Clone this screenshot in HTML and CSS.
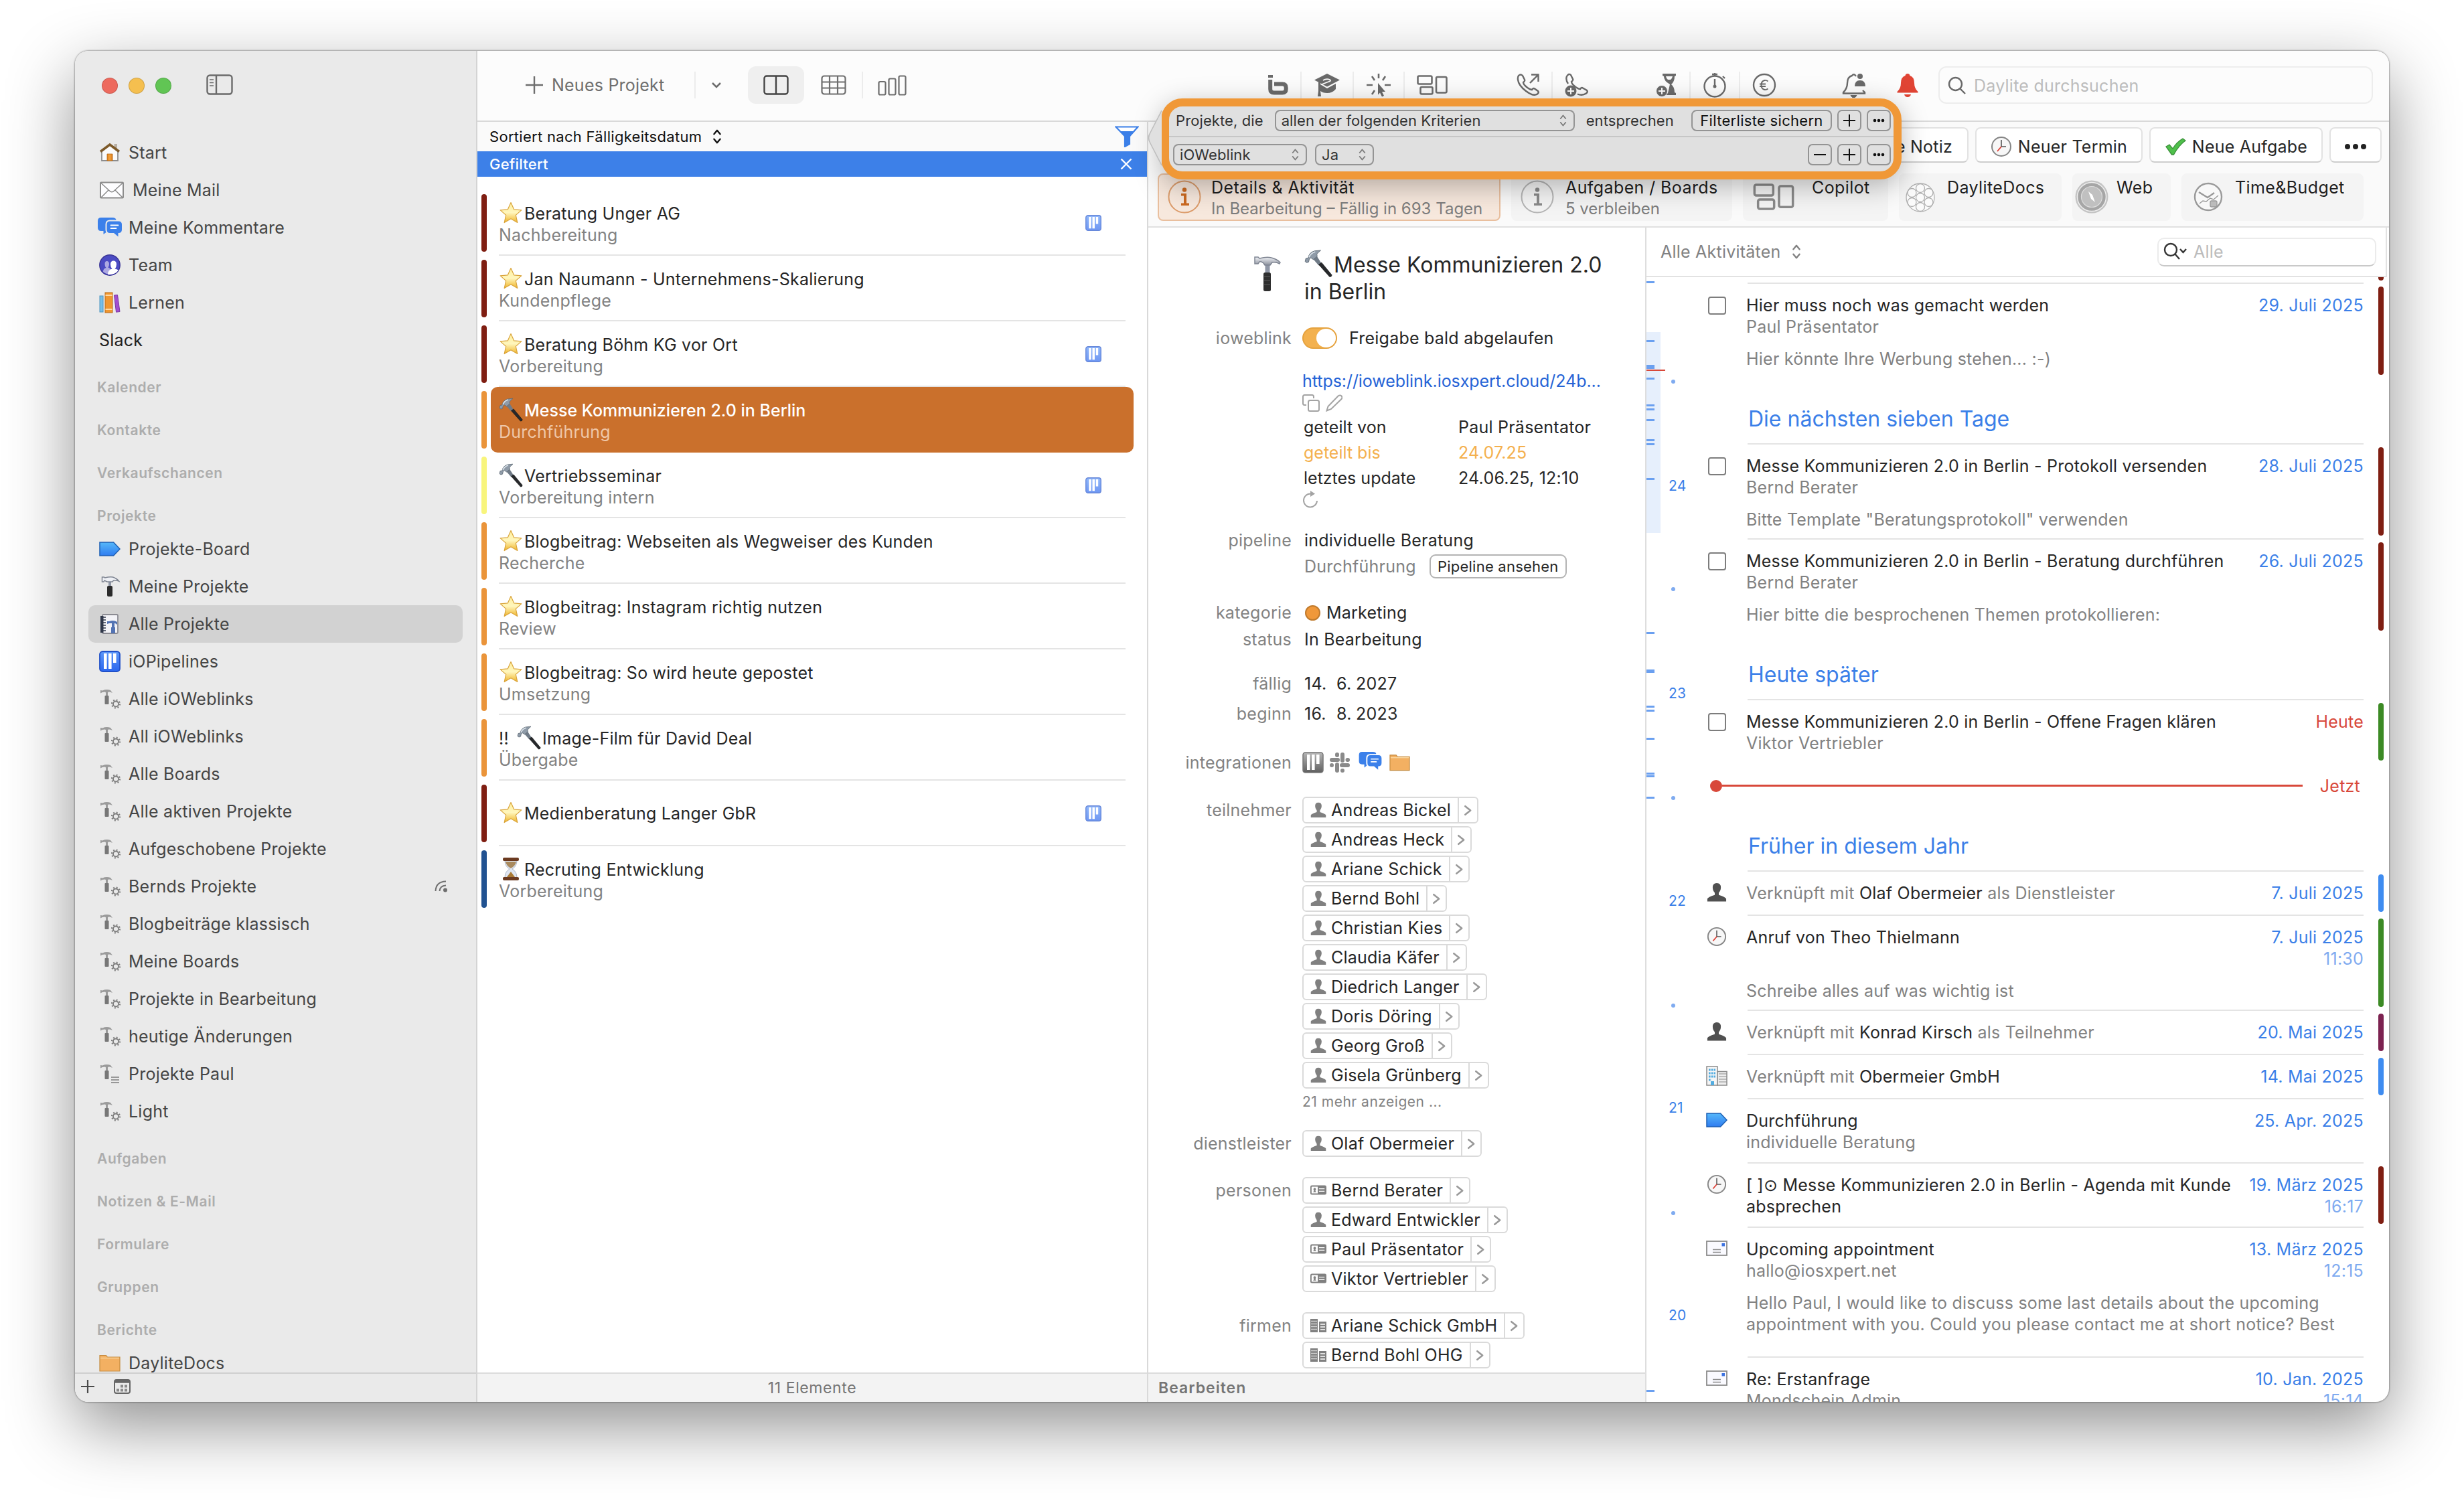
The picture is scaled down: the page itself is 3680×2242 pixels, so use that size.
FILE: index.html
```html
<!DOCTYPE html>
<html lang="de">

<head>
  <meta charset="UTF-8" />
  <meta name="viewport" content="width=device-width, initial-scale=1.0" />
  <title>Daylite – Alle Projekte</title>
  <link rel="stylesheet" href="styles.css">
</head>

<body>
  <!-- icon sprite -->
  <svg class="sprite" width="0" height="0">
    <defs>
      <linearGradient id="gStar" x1="0" y1="0" x2="0" y2="1"><stop offset="0" stop-color="#fff0a0" /><stop offset=".5" stop-color="#fff6bc" /><stop offset="1" stop-color="#f0b429" /></linearGradient>
      <linearGradient id="gTag" x1="0" y1="0" x2="0" y2="1"><stop offset="0" stop-color="#55b8fa" /><stop offset="1" stop-color="#2f7cf0" /></linearGradient>
      <linearGradient id="gPipe" x1="0" y1="0" x2="0" y2="1"><stop offset="0" stop-color="#5d97f8" /><stop offset="1" stop-color="#2a66ee" /></linearGradient>
      <linearGradient id="gPipeGray" x1="0" y1="0" x2="0" y2="1"><stop offset="0" stop-color="#b4b4b4" /><stop offset="1" stop-color="#606060" /></linearGradient>
      <linearGradient id="gMetal" x1="0" y1="0" x2="0" y2="1"><stop offset="0" stop-color="#f2f4f8" /><stop offset="1" stop-color="#8b909c" /></linearGradient>
      <linearGradient id="gDoor" x1="0" y1="0" x2="1" y2="0"><stop offset="0" stop-color="#e2851d" /><stop offset=".5" stop-color="#f3a13c" /><stop offset="1" stop-color="#d97a18" /></linearGradient>
    </defs>
    <symbol id="star" viewBox="0 0 36 36">
      <path d="M18 2.500l4.600 10.300 11.200 1.100-8.500 7.500 2.500 11.100L18 26.800 8.200 32.500l2.500-11.100-8.500-7.500 11.200-1.100z" fill="url(#gStar)" stroke="#d9a43c" stroke-width="1.200" stroke-linejoin="round" />
    </symbol>
    <symbol id="hammer" viewBox="0 0 36 36">
      <path d="M11 12l5-3.500 6 9.500-3.600 2.500z" fill="#6f7a86" />
      <path d="M18.500 19.500l3.600-2.600L35 32.500q.500 2.500-2.600 2.600z" fill="#26282b" stroke="#111" stroke-width=".6" />
      <path d="M1 15.500l1-4 3-.500Q6 4 13 2l8-.800-3.500 3.200Q15 6 16.500 9l-5 4-3-2.200-2 1.200-1 4.200-2.500.800z" fill="#8f9ba8" stroke="#5c6873" stroke-width=".8" />
      <path d="M6 10q2-5 8-7" stroke="#dfe7ee" stroke-width="1.500" fill="none" />
    </symbol>
    <symbol id="hourglass" viewBox="0 0 36 36">
      <path d="M9 5h18q0 9-7 13 7 4 7 13H9q0-9 7-13-7-4-7-13z" fill="#dfe6f2" stroke="#aab4c4" />
      <path d="M10 7h16q-1 6-8 10-7-4-8-10z" fill="#a98a5e" />
      <path d="M18 22l6 8H12z" fill="#a97a35" />
      <rect x="6" y="1" width="24" height="5" rx="2" fill="#6b3a20" />
      <rect x="6" y="30" width="24" height="5" rx="2" fill="#6b3a20" />
    </symbol>
    <symbol id="pipe" viewBox="0 0 32 32">
      <rect x="1" y="1" width="30" height="30" rx="4.500" fill="url(#gPipe)" stroke="#2050c8" stroke-width="1.800" />
      <path d="M7 4h4.600v23H7zM14 4h4.600v23H14zM21 4h4.600v14H21z" fill="#fff" />
    </symbol>
    <symbol id="pipegray" viewBox="0 0 32 32">
      <rect x="1" y="1" width="30" height="30" rx="3.500" fill="url(#gPipeGray)" stroke="#777" stroke-width="1.500" />
      <path d="M7 4h4.600v23H7zM14 4h4.600v23H14zM21 4h4.600v14H21z" fill="#fff" />
    </symbol>
    <symbol id="house" viewBox="0 0 32 32">
      <path d="M22.500 3h4.500v10h-4.500z" fill="#b9b0a4" />
      <path d="M4 14L16 4l12 10v14H4z" fill="#fafafa" stroke="#8d8d8d" stroke-width="1.800" />
      <path d="M12 18h8v10h-8z" fill="url(#gDoor)" stroke="#b5640f" stroke-width=".8" />
      <path d="M2 14.500L16 4l14 10.500" fill="none" stroke="#7d5a2a" stroke-width="3.600" />
    </symbol>
    <symbol id="envelope" viewBox="0 0 38 26">
      <rect x="2" y="1.500" width="34" height="23" rx="1" fill="#fdfdff" stroke="#8c8c8c" stroke-width="2" />
      <path d="M2.500 2l13 12q3.500 3.500 7 0L35.500 2M3 24l11-11M35 24L24 13" fill="none" stroke="#8c8c8c" stroke-width="1.500" />
    </symbol>
    <symbol id="bubbles" viewBox="0 0 38 32">
      <path d="M6 1h17q5 0 5.500 3.500H19q-6.500 0-6.500 6.500v8q0 2.500 1 4L9.500 26v-5H6q-5 0-5-5V6q0-5 5-5z" fill="#3b80ea" />
      <path d="M19 6.500h13q5 0 5 5V19q0 5-5 5h-.500v5.500L25 24h-6q-4.500 0-4.500-5v-7.500q0-5 4.500-5z" fill="#3b80ea" />
      <path d="M20.500 12.500h11M20.500 17h8" stroke="#fff" stroke-width="1.800" stroke-linecap="round" />
    </symbol>
    <symbol id="team" viewBox="0 0 32 32">
      <circle cx="16" cy="16" r="15.200" fill="#4b4bc3" stroke="#3a3596" stroke-width="1.400" />
      <path d="M6 26q0-5 4.500-6-2-2-2-5.500 0-4.500 3-4.500 3.500 0 3.500 4.500 0 3-1.500 5 3 1 3.500 3v7q-7 0-11-3.500z" fill="#aeaae2" />
      <path d="M13 30q0-7 6.500-8.500-2.500-2.500-2.500-6.500 0-5.500 4.500-5.500t4.500 5.500q0 4-2.500 6.500 4 .500 5 2.500-5 7-15.500 6z" fill="#fff" />
    </symbol>
    <symbol id="books" viewBox="0 0 32 32">
      <rect x="1" y="6" width="5" height="24" fill="#77bfe8" stroke="#4a93bf" />
      <rect x="9" y="1" width="11" height="30" fill="#f0962f" stroke="#b96d1a" />
      <path d="M9.500 5h10M9.500 26h10" stroke="#ffd9a3" stroke-width="1.800" />
      <path d="M22.500 5l5-.500 3.500 25-5.500.700z" fill="#a14fd0" stroke="#7a35a4" />
    </symbol>
    <symbol id="tag" viewBox="0 0 32 24">
      <path d="M1 2h20.500L31 12l-9.500 10H1z" fill="url(#gTag)" stroke="#1d5fb4" stroke-width="1.500" />
    </symbol>
    <symbol id="claw" viewBox="0 0 40 54">
      <path d="M16.500 14h7v20h-7z" fill="#9097a6" />
      <path d="M1 2h5l2 2q11-3 18-1 8 2 13 7l-1 2q-5-3-11-2l-3 4h-8l-2-3Q10 8 8 9l-2 3H1z" fill="url(#gMetal)" stroke="#7f8592" stroke-width="1.500" />
      <rect x="14" y="25" width="11" height="28" rx="2.500" fill="#2f2f2f" />
      <path d="M15 31h9M15 37h9M15 43h9" stroke="#4d4d4d" stroke-width="1.500" />
    </symbol>
    <symbol id="clawsmall" viewBox="0 0 32 32">
      <path d="M14 5h4v12h-4z" fill="#9097a6" />
      <path d="M4.500 2h3l1 1q8-2 12-1 6 2 9 6-5-2-8-1l-1.500 2H12L8 7 7 9H4.500z" fill="#eef0f5" stroke="#7f8592" stroke-width="1.500" />
      <rect x="12" y="15" width="8" height="16" rx="2" fill="#2b2b2b" />
    </symbol>
    <symbol id="notebook" viewBox="0 0 32 32">
      <rect x="5" y="2" width="23" height="28" rx="1.500" fill="#f3f3f7" stroke="#8b8b92" stroke-width="1.800" />
      <path d="M2 4h4.500v25H2z" fill="#30384a" />
      <path d="M6 6h4M6 10h4M6 14h4M6 18h4M6 22h4M6 26h4" stroke="#30384a" stroke-width="1.600" />
      <path d="M12 12h3q7-2.500 12 1v4l-3-2h-1v6h1v9h-6v-9h1v-6h-4l-3 1z" fill="#5373b3" />
    </symbol>
    <symbol id="hgear" viewBox="0 0 32 32">
      <path d="M2 3l3 .500Q11 1 17 3l3 4q-3-2-6-1.500l-1 1v6h-3V6.500L9 5.500 5 6 2 7.500z" fill="#9b9b9b" />
      <rect x="8.500" y="11" width="6" height="13" rx="1" fill="#777" />
      <circle cx="25" cy="23.500" r="4" fill="none" stroke="#7d7d7d" stroke-width="1.800" />
      <circle cx="25" cy="23.500" r="6" fill="none" stroke="#7d7d7d" stroke-width="2.200" stroke-dasharray="1.900 2.810" />
    </symbol>
    <symbol id="hlist" viewBox="0 0 32 32">
      <path d="M2 3l3 .500Q11 1 17 3l3 4q-3-2-6-1.500l-1 1v6h-3V6.500L9 5.500 5 6 2 7.500z" fill="#9b9b9b" />
      <rect x="8.500" y="11" width="6" height="13" rx="1" fill="#777" />
      <path d="M18 21h12M18 25h12M18 29h12" stroke="#7d7d7d" stroke-width="1.600" />
    </symbol>
    <symbol id="folder" viewBox="0 0 32 26">
      <path d="M1 1.500h9.500l2 2.500H31v21H1z" fill="#f3b062" stroke="#c48a3e" stroke-width="1.200" />
      <path d="M2 5.500h28" stroke="#fad9a4" stroke-width="1.300" />
    </symbol>
    <symbol id="person" viewBox="0 0 32 32">
      <path d="M16 1q6.500 0 6.500 7 0 5-3.300 8.500v3.500Q30 23.500 31 26v4.500H1V26q1-2.500 11.800-6v-3.500Q9.500 13 9.500 8q0-7 6.500-7z" fill="currentColor" />
    </symbol>
    <symbol id="idcard" viewBox="0 0 26 16">
      <rect x="1" y="1" width="24" height="13" rx="1.500" fill="#fff" stroke="#808080" stroke-width="2" />
      <rect x="12" y="1" width="13" height="13" fill="#808080" />
      <path d="M14 5.500h9M14 9.500h9" stroke="#fff" stroke-width="1.300" />
      <path d="M7 4a2 2 0 012 2q0 1.500-1 2.500l1.500 2.500h-5L6 8.500Q5 7.500 5 6a2 2 0 012-2z" fill="#808080" />
    </symbol>
    <symbol id="firm" viewBox="0 0 24 20">
      <path d="M0 0h11v20H0z" fill="#808080" />
      <path d="M1.500 3.500h8M1.500 7.500h8M1.500 11.500h8M1.500 15.500h8" stroke="#fff" stroke-width="1.600" stroke-dasharray="2 1" />
      <path d="M13 4h11v16H13z" fill="#808080" />
      <path d="M15 8h7M15 12h7M15 16h7" stroke="#fff" stroke-width="1.400" />
    </symbol>
    <symbol id="clock" viewBox="0 0 32 32">
      <circle cx="16" cy="16" r="14" fill="#f7f7f7" stroke="#858585" stroke-width="2" />
      <path d="M16 6v10h7" fill="none" stroke="#555" stroke-width="1.600" />
      <path d="M16 16l-6 7" stroke="#dc3b30" stroke-width="1.800" />
    </symbol>
    <symbol id="office" viewBox="0 0 32 30">
      <path d="M1 1h16v28H1z" fill="#f5f5f5" stroke="#8c8c8c" stroke-width="1.500" />
      <path d="M17 8.500h14V29H17z" fill="#ededed" stroke="#8c8c8c" stroke-width="1.500" />
      <path d="M4 6h10M4 11h10M4 16h10M4 21h4" stroke="#52ace0" stroke-width="3" stroke-dasharray="2.600 1.200" />
      <path d="M19 12h12M19 16h12M19 20h12M19 24h12" stroke="#8c8c8c" stroke-width="1.200" />
      <rect x="7" y="23" width="5" height="6" fill="#52ace0" />
    </symbol>
    <symbol id="letter" viewBox="0 0 32 24">
      <rect x="1" y="1" width="30" height="21" fill="#fafaff" stroke="#8c8c8c" stroke-width="1.800" />
      <rect x="23.500" y="4" width="4.500" height="4.500" fill="#3b72e0" />
      <path d="M10 13.500h12M10 17.500h12" stroke="#8c8c8c" stroke-width="1.500" />
    </symbol>
    <symbol id="updown" viewBox="0 0 14 24">
      <path d="M2 8l5-6 5 6M2 16l5 6 5-6" fill="none" stroke="currentColor" stroke-width="2.600" stroke-linecap="round" stroke-linejoin="round" />
    </symbol>
    <symbol id="chev" viewBox="0 0 12 18">
      <path d="M2 3l7.500 6L2 15" fill="none" stroke="#999" stroke-width="2.400" stroke-linecap="round" stroke-linejoin="round" />
    </symbol>
    <symbol id="boards" viewBox="0 0 46 30">
      <g fill="none" stroke="currentColor" stroke-width="2.600">
        <rect x="1.500" y="1.500" width="21" height="12" rx="2" />
        <rect x="5.500" y="18" width="18" height="10.500" rx="2" />
        <rect x="29" y="3" width="15.500" height="23.500" rx="2" />
      </g>
    </symbol>
    <symbol id="info" viewBox="0 0 50 50">
      <circle cx="25" cy="25" r="23.500" fill="none" stroke="currentColor" stroke-opacity=".6" stroke-width="2" />
      <circle cx="25" cy="14.500" r="3.200" fill="currentColor" />
      <path d="M20 20h8v14.500h4V38H20v-3.500h4V23.500h-4z" fill="currentColor" />
    </symbol>
  </svg>

  <div class="window">
    <aside class="sidebar">
      <div class="titlebar">
        <i class="light red"></i><i class="light yellow"></i><i class="light green"></i>
        <svg class="side-toggle" width="40" height="31" viewBox="0 0 40 31" fill="none" stroke="#6a6a6a" stroke-width="2.400">
          <rect x="1.500" y="1.500" width="37" height="28" rx="4" />
          <path d="M15 1.500v28" />
          <path d="M5 8h6M5 12.500h6M5 17h6" stroke-width="1.600" />
        </svg>
      </div>
      <nav class="side-list">
        <a class="item"><svg class="ico"><use href="#house" /></svg>Start</a>
        <a class="item"><svg class="ico mail"><use href="#envelope" /></svg>Meine Mail</a>
        <a class="item"><svg class="ico chat"><use href="#bubbles" /></svg>Meine Kommentare</a>
        <a class="item"><svg class="ico"><use href="#team" /></svg>Team</a>
        <a class="item"><svg class="ico"><use href="#books" /></svg>Lernen</a>
        <a class="item plain">Slack</a>
        <h4>Kalender</h4>
        <h4>Kontakte</h4>
        <h4>Verkaufschancen</h4>
        <h4>Projekte</h4>
        <a class="item"><svg class="ico"><use href="#tag" /></svg>Projekte-Board</a>
        <a class="item"><svg class="ico"><use href="#clawsmall" /></svg>Meine Projekte</a>
        <a class="item active"><svg class="ico"><use href="#notebook" /></svg>Alle Projekte</a>
        <a class="item"><svg class="ico"><use href="#pipe" /></svg>iOPipelines</a>
        <a class="item"><svg class="ico"><use href="#hgear" /></svg>Alle iOWeblinks</a>
        <a class="item"><svg class="ico"><use href="#hgear" /></svg>All iOWeblinks</a>
        <a class="item"><svg class="ico"><use href="#hgear" /></svg>Alle Boards</a>
        <a class="item"><svg class="ico"><use href="#hgear" /></svg>Alle aktiven Projekte</a>
        <a class="item"><svg class="ico"><use href="#hgear" /></svg>Aufgeschobene Projekte</a>
        <a class="item"><svg class="ico"><use href="#hgear" /></svg>Bernds Projekte
          <svg class="share" width="20" height="18" viewBox="0 0 20 18" fill="none" stroke="#6e6e6e" stroke-width="2"><path d="M1.500 16Q2 2 17 1.500M7.500 16Q8 8 17 7.500" /><circle cx="16" cy="14.500" r="2" fill="#6e6e6e" /></svg></a>
        <a class="item"><svg class="ico"><use href="#hgear" /></svg>Blogbeiträge klassisch</a>
        <a class="item"><svg class="ico"><use href="#hgear" /></svg>Meine Boards</a>
        <a class="item"><svg class="ico"><use href="#hgear" /></svg>Projekte in Bearbeitung</a>
        <a class="item"><svg class="ico"><use href="#hgear" /></svg>heutige Änderungen</a>
        <a class="item"><svg class="ico"><use href="#hlist" /></svg>Projekte Paul</a>
        <a class="item"><svg class="ico"><use href="#hgear" /></svg>Light</a>
        <h4>Aufgaben</h4>
        <h4>Notizen &amp; E-Mail</h4>
        <h4>Formulare</h4>
        <h4>Gruppen</h4>
        <h4>Berichte</h4>
        <a class="item"><svg class="ico"><use href="#folder" /></svg>DayliteDocs</a>
      </nav>
      <div class="side-footer">
        <svg width="22" height="22" viewBox="0 0 22 22" stroke="#4a4a4a" stroke-width="2.200"><path d="M11 1v20M1 11h20" /></svg>
        <svg width="25" height="22" viewBox="0 0 25 22" fill="none" stroke="#666" stroke-width="2"><rect x="1" y="1" width="23" height="20" rx="3" /><path d="M1 3.500h23" stroke-width="4.500" /><path d="M10 10.500h11M4 16.500h17" stroke="#8a8a8a" stroke-width="4" stroke-dasharray="4 2" /></svg>
      </div>
    </aside>

    <div class="main">
      <header class="toolbar">
        <button class="new-project">
          <svg width="28" height="28" viewBox="0 0 28 28" stroke="#6e6e6e" stroke-width="2.400"><path d="M14 1v26M1 14h26" /></svg>
          Neues Projekt
        </button>
        <i class="sep"></i>
        <svg class="drop" width="16" height="12" viewBox="0 0 16 12" fill="none" stroke="#6e6e6e" stroke-width="2.600"><path d="M2 3l6 6 6-6" /></svg>
        <span class="view active">
          <svg width="38" height="30" viewBox="0 0 38 30" fill="none" stroke="#444" stroke-width="2.400"><rect x="1.500" y="1.500" width="35" height="27" rx="3.500" /><path d="M19 1.500v27" /></svg>
        </span>
        <span class="view">
          <svg width="38" height="30" viewBox="0 0 38 30" fill="none" stroke="#6e6e6e" stroke-width="2.200"><rect x="1.500" y="1.500" width="35" height="27" rx="3.500" /><path d="M13 1.500v27M25 1.500v27M1.500 10.500h35M1.500 19.500h35" /></svg>
        </span>
        <i class="sep"></i>
        <svg class="chart" width="43" height="31" viewBox="0 0 43 31" fill="none" stroke="#6e6e6e" stroke-width="2.200"><rect x="1.500" y="10" width="10" height="19.500" rx="2" /><rect x="16.500" y="5.500" width="10" height="24" rx="2" /><rect x="31.500" y="1.500" width="10" height="28" rx="2" /></svg>

        <div class="tools">
          <div class="tgroup first">
            <svg width="30" height="30" viewBox="0 0 30 30"><path d="M0 0h7v4H0z" fill="#6a6a6a" /><path d="M3.200 7v14q0 5.500 5.500 5.500h12.500q5.500 0 5.500-5.500v-2q0-5.500-5.500-5.500H9" fill="none" stroke="#6a6a6a" stroke-width="6" /></svg>
            <i class="sep"></i>
            <svg width="40" height="36" viewBox="0 0 40 36" fill="#6a6a6a"><path d="M20 1l19 9.500-19 10L1 10.500z" /><path d="M10 17l10 6 13-7v8q-5 6-13 6-6 0-10-3z" /><path d="M7 14h3v13l1 8H6l1-8z" /><path d="M14 11q5-3 10-1 3 2-3 3.500l-10 4" fill="none" stroke="#fcfcfc" stroke-width="1.800" /></svg>
            <i class="sep"></i>
            <svg width="38" height="36" viewBox="0 0 38 36" fill="none" stroke="#6a6a6a" stroke-width="2.600"><path d="M19 1v7M9 5l4 6M29 5l-4 6M1 18h9M28 18h9M9 32l4-6" /><path d="M18 15l11 13h-5l3 6-3 1.500-3-6-3 3z" fill="#6a6a6a" stroke="none" /></svg>
            <i class="sep"></i>
            <svg class="ic-boards" width="46" height="30"><use href="#boards" /></svg>
          </div>
          <div class="tgroup phones">
            <svg width="34" height="34" viewBox="0 0 34 34" fill="none" stroke="#6a6a6a" stroke-width="2.400"><path d="M3 3q3-3 6 0l3 6q1 2-2 4 0 3 5 7t8 4q2-3 4-1.500l5 3.500q2 2-1 4.500-6 4-17-4.500T2 9q-.500-4 1-6z" /><path d="M20 14L32 2M22 1.500h10.500V12" /></svg>
            <i class="sep"></i>
            <svg width="36" height="36" viewBox="0 0 36 36" fill="none" stroke="#6a6a6a" stroke-width="2.400"><path d="M5 16Q1 10 3 5q3-5 6-2l3 6q1 2-2 4 0 3 5 7t8 4q2-3 4-1.500l6 3.500q2 2-1 4.500-6 4-13 1" /><circle cx="9" cy="27" r="8.500" fill="#6a6a6a" stroke="none" /><path d="M9 22v10M4 27h10" stroke="#fff" stroke-width="2" /></svg>
          </div>
          <div class="tgroup times">
            <svg width="32" height="36" viewBox="0 0 32 36"><path d="M10 1h20v3l-2 1q0 8-5 12 5 4 5 12l2 1v3H14l4-3 3-13Q12 12 12 5l-2-1z" fill="#6a6a6a" /><path d="M15 5h10q-1 4-3 5h-4q-2-1-3-5z" fill="#fcfcfc" /><circle cx="9" cy="27" r="8.500" fill="#6a6a6a" stroke="#fcfcfc" /><path d="M9 22v10M4 27h10" stroke="#fff" stroke-width="2" /></svg>
            <i class="sep"></i>
            <svg width="36" height="38" viewBox="0 0 36 38" fill="none" stroke="#6a6a6a" stroke-width="2.400"><circle cx="18" cy="21" r="15.500" /><path d="M18 10v11M18 1v5M30 6l3 3M14 3h8" /><circle cx="18" cy="21" r="2.500" fill="#6a6a6a" stroke="none" /></svg>
            <i class="sep"></i>
            <svg width="36" height="36" viewBox="0 0 36 36" fill="none" stroke="#6a6a6a" stroke-width="2.400"><circle cx="18" cy="18" r="16" /><path d="M23.500 12.500Q21 10.500 18.500 11q-5 1-5 7t5 7q2.500.500 5-1.500M11 16.500h9M11 20h9" stroke-width="1.900" /></svg>
          </div>
          <svg class="bell-team" width="36" height="38" viewBox="0 0 36 38" fill="none" stroke="#6a6a6a" stroke-width="2.400"><path d="M21 6q-3-5-6-1-7 2-7 11 0 8-6 14v1.500h32V30l-3-3" /><path d="M13 34.500h9l-2.500 3h-4z" fill="#6a6a6a" stroke-width="1" /><circle cx="27" cy="6" r="4" fill="#6a6a6a" stroke="none" /><path d="M19 21q0-9 8-9t8 9z" fill="#6a6a6a" stroke="none" /></svg>
          <svg class="bell" width="32" height="35" viewBox="0 0 32 35" fill="#e04434"><path d="M16 0q3 0 3.500 3Q26 5 26 14q0 8 5.500 13v1.500H.5V27Q6 22 6 14q0-9 6.500-11Q13 0 16 0zM11 31h10q-1 4-5 4t-5-4z" /></svg>
          <label class="search">
            <svg width="28" height="28" viewBox="0 0 28 28" fill="none" stroke="#6a6a6a" stroke-width="2.400"><circle cx="11.500" cy="11.500" r="9.500" /><path d="M18.500 18.500L26 26" /></svg>
            Daylite durchsuchen
          </label>
        </div>
      </header>

      <div class="columns">
        <section class="list-pane">
          <div class="sort">Sortiert nach Fälligkeitsdatum <svg width="14" height="22"><use href="#updown" /></svg>
            <svg class="funnel" width="36" height="32" viewBox="0 0 36 32"><path d="M1.500 1.500h33L22 15.500V27l-7 4V15.500z" fill="#fff" stroke="#3b7fe8" stroke-width="2.200" /><path d="M7 8h22l-7 8v11l-7 4V16z" fill="#3b7fe8" /></svg>
          </div>
          <div class="filtered">Gefiltert
            <svg width="18" height="18" viewBox="0 0 18 18" stroke="#fff" stroke-width="2.400"><path d="M1.500 1.500l15 15M16.500 1.500l-15 15" /></svg>
          </div>
          <ul class="projects">
            <li><i class="bar darkred"></i><div class="row"><p><b><svg><use href="#star" /></svg>Beratung Unger AG</b><span>Nachbereitung</span></p><svg class="pl"><use href="#pipe" /></svg></div></li>
            <li><i class="bar darkred"></i><div class="row"><p><b><svg><use href="#star" /></svg>Jan Naumann - Unternehmens-Skalierung</b><span>Kundenpflege</span></p></div></li>
            <li><i class="bar darkred"></i><div class="row"><p><b><svg><use href="#star" /></svg>Beratung Böhm KG vor Ort</b><span>Vorbereitung</span></p><svg class="pl"><use href="#pipe" /></svg></div></li>
            <li class="selected"><i class="bar orange"></i><div class="row"><p><b><svg><use href="#hammer" /></svg>Messe Kommunizieren 2.0 in Berlin</b><span>Durchführung</span></p></div></li>
            <li><i class="bar yellow"></i><div class="row"><p><b><svg><use href="#hammer" /></svg>Vertriebsseminar</b><span>Vorbereitung intern</span></p><svg class="pl"><use href="#pipe" /></svg></div></li>
            <li><i class="bar orange"></i><div class="row"><p><b><svg><use href="#star" /></svg>Blogbeitrag: Webseiten als Wegweiser des Kunden</b><span>Recherche</span></p></div></li>
            <li><i class="bar orange"></i><div class="row"><p><b><svg><use href="#star" /></svg>Blogbeitrag: Instagram richtig nutzen</b><span>Review</span></p></div></li>
            <li><i class="bar orange"></i><div class="row"><p><b><svg><use href="#star" /></svg>Blogbeitrag: So wird heute gepostet</b><span>Umsetzung</span></p></div></li>
            <li><i class="bar orange"></i><div class="row"><p><b>!!&nbsp;<svg class="after"><use href="#hammer" /></svg>Image-Film für David Deal</b><span>Übergabe</span></p></div></li>
            <li><i class="bar darkred"></i><div class="row single"><p><b><svg><use href="#star" /></svg>Medienberatung Langer GbR</b></p><svg class="pl"><use href="#pipe" /></svg></div></li>
            <li><i class="bar navy"></i><div class="row last"><p><b><svg><use href="#hourglass" /></svg>Recruting Entwicklung</b><span>Vorbereitung</span></p></div></li>
          </ul>
          <footer class="count">11 Elemente</footer>
        </section>

        <section class="content">
          <div class="head">
            <div class="actions">
              <button class="note">Neue Notiz</button>
              <button class="event"><svg width="32" height="32"><use href="#clock" /></svg>Neuer Termin</button>
              <button class="task"><svg width="32" height="26" viewBox="0 0 32 26"><path d="M2 13l5-3 5 6Q18 6 27 1l4 3Q21 11 13.500 25h-3z" fill="#4fc04b" stroke="#3a8f3a" stroke-width="1.300" /></svg>Neue Aufgabe</button>
              <button class="more"><svg width="34" height="10" viewBox="0 0 34 10" fill="#222"><circle cx="5" cy="5" r="4" /><circle cx="17" cy="5" r="4" /><circle cx="29" cy="5" r="4" /></svg></button>
            </div>
            <div class="tabs">
              <div class="tab details on"><svg class="inf" width="50" height="50"><use href="#info" /></svg><p><b>Details &amp; Aktivität</b><span>In Bearbeitung – Fällig in 693 Tagen</span></p></div>
              <div class="tab tasks"><svg class="inf" width="50" height="50"><use href="#info" /></svg><p><b>Aufgaben / Boards</b><span>5 verbleiben</span></p></div>
              <div class="tab copilot"><svg width="62" height="40"><use href="#boards" /></svg><p><b>Copilot</b></p></div>
              <div class="tab docs"><svg width="44" height="44" viewBox="0 0 44 44" fill="#fbfbfb" stroke="#b0b0b0" stroke-width="1.300"><circle cx="22" cy="22" r="21" /><circle cx="22" cy="22" r="6.500" /><circle cx="22" cy="8" r="6.500" /><circle cx="22" cy="36" r="6.500" /><circle cx="9.500" cy="15" r="6.500" /><circle cx="34.500" cy="15" r="6.500" /><circle cx="9.500" cy="29" r="6.500" /><circle cx="34.500" cy="29" r="6.500" /></svg><p><b>DayliteDocs</b></p></div>
              <div class="tab web"><svg width="50" height="50" viewBox="0 0 50 50"><circle cx="25" cy="25" r="24.500" fill="#c4c4c4" /><circle cx="25" cy="25" r="21.500" fill="#a6a6a6" stroke="#eee" stroke-width="1.500" /><circle cx="25" cy="25" r="15.500" fill="#c0c0c0" stroke="#ddd" stroke-width="1.200" /><path d="M20 17l6 5 4 11-6-5z" fill="#fff" /></svg><p><b>Web</b></p></div>
              <div class="tab budget"><svg width="44" height="44" viewBox="0 0 44 44" fill="none" stroke="#9a9a9a" stroke-width="2.400"><circle cx="22" cy="22" r="20" fill="#f8f8f8" /><path d="M8 15l13 8 10-7" /><path d="M9 32l5-4 5 1 6-5 5 2 7-6" stroke-width="1.400" /><rect x="25" y="28" width="10" height="9" rx="2" fill="#bbb" stroke-width="1.300" /></svg><p><b>Time&amp;Budget</b></p></div>
            </div>
          </div>

          <div class="panes">
            <article class="detail">
              <div class="fields">
                <div class="field title"><label><svg width="40" height="54"><use href="#claw" /></svg></label><h1><svg><use href="#hammer" /></svg>Messe Kommunizieren 2.0<br>in Berlin</h1></div>
                <div class="field weblink"><label>ioweblink</label><i class="switch"></i><span>Freigabe bald abgelaufen</span></div>
                <a class="url">https://ioweblink.iosxpert.cloud/24b...</a>
                <div class="mini">
                  <svg width="26" height="26" viewBox="0 0 26 26" fill="none" stroke="#a3a3a3" stroke-width="2"><rect x="9" y="9" width="16" height="16" rx="2.500" /><path d="M6 16H3.500Q1 16 1 13.500v-10Q1 1 3.500 1h11Q17 1 17 3.500V6" /></svg>
                  <svg width="25" height="26" viewBox="0 0 25 26" fill="none" stroke="#a3a3a3" stroke-width="2"><path d="M1.500 24.500L3.500 18 18.500 2.500q3-2 5 0t0 4.500L8 22z" /></svg>
                </div>
                <dl class="share-info">
                  <div><dt>geteilt von</dt><dd>Paul Präsentator</dd></div>
                  <div class="warn"><dt>geteilt bis</dt><dd>24.07.25</dd></div>
                  <div><dt>letztes update</dt><dd>24.06.25, 12:10</dd></div>
                </dl>
                <div class="mini"><svg width="24" height="26" viewBox="0 0 24 26" fill="none" stroke="#a3a3a3" stroke-width="2"><path d="M12 4.500A10 10 0 1022 15" /><path d="M12 0l7 4.500-7 4.500z" fill="#a3a3a3" stroke="none" /></svg></div>
                <div class="field pipeline"><label>pipeline</label><span>individuelle Beratung</span></div>
                <div class="field stage"><label></label><span class="grey">Durchführung</span><button>Pipeline ansehen</button></div>
                <div class="field category"><label>kategorie</label><i class="dot"></i><span>Marketing</span></div>
                <div class="field status"><label>status</label><span>In Bearbeitung</span></div>
                <div class="field due"><label>fällig</label><span class="date"><i>14.</i><i>6.</i>2027</span></div>
                <div class="field begin"><label>beginn</label><span class="date"><i>16.</i><i>8.</i>2023</span></div>
                <div class="field integr"><label>integrationen</label>
                  <svg width="32" height="32"><use href="#pipegray" /></svg>
                  <svg width="32" height="32" viewBox="0 0 32 32" stroke="#8a8a8a" stroke-width="6" stroke-linecap="round"><path d="M12 4v.1M20 4v9M4 12h9M28 12v.1M4 20v.1M19 20h9M12 19v9M20 28v.1M12 4.500v.5M27.500 12h.5" /></svg>
                  <svg class="bub" width="37" height="30"><use href="#bubbles" /></svg>
                  <svg width="31" height="26"><use href="#folder" /></svg>
                </div>
                <div class="field people"><label>teilnehmer</label>
                  <div class="chips">
                    <a class="chip"><svg><use href="#person" /></svg>Andreas Bickel<i><svg><use href="#chev" /></svg></i></a>
                    <a class="chip"><svg><use href="#person" /></svg>Andreas Heck<i><svg><use href="#chev" /></svg></i></a>
                    <a class="chip"><svg><use href="#person" /></svg>Ariane Schick<i><svg><use href="#chev" /></svg></i></a>
                    <a class="chip"><svg><use href="#person" /></svg>Bernd Bohl<i><svg><use href="#chev" /></svg></i></a>
                    <a class="chip"><svg><use href="#person" /></svg>Christian Kies<i><svg><use href="#chev" /></svg></i></a>
                    <a class="chip"><svg><use href="#person" /></svg>Claudia Käfer<i><svg><use href="#chev" /></svg></i></a>
                    <a class="chip"><svg><use href="#person" /></svg>Diedrich Langer<i><svg><use href="#chev" /></svg></i></a>
                    <a class="chip"><svg><use href="#person" /></svg>Doris Döring<i><svg><use href="#chev" /></svg></i></a>
                    <a class="chip"><svg><use href="#person" /></svg>Georg Groß<i><svg><use href="#chev" /></svg></i></a>
                    <a class="chip"><svg><use href="#person" /></svg>Gisela Grünberg<i><svg><use href="#chev" /></svg></i></a>
                    <span class="show-more">21 mehr anzeigen ...</span>
                  </div>
                </div>
                <div class="field vendor"><label>dienstleister</label>
                  <div class="chips"><a class="chip"><svg><use href="#person" /></svg>Olaf Obermeier<i><svg><use href="#chev" /></svg></i></a></div>
                </div>
                <div class="field persons"><label>personen</label>
                  <div class="chips">
                    <a class="chip"><svg><use href="#idcard" /></svg>Bernd Berater<i><svg><use href="#chev" /></svg></i></a>
                    <a class="chip"><svg><use href="#person" /></svg>Edward Entwickler<i><svg><use href="#chev" /></svg></i></a>
                    <a class="chip"><svg><use href="#idcard" /></svg>Paul Präsentator<i><svg><use href="#chev" /></svg></i></a>
                    <a class="chip"><svg><use href="#idcard" /></svg>Viktor Vertriebler<i><svg><use href="#chev" /></svg></i></a>
                  </div>
                </div>
                <div class="field persons"><label>firmen</label>
                  <div class="chips">
                    <a class="chip"><svg><use href="#firm" /></svg>Ariane Schick GmbH<i><svg><use href="#chev" /></svg></i></a>
                    <a class="chip"><svg><use href="#firm" /></svg>Bernd Bohl OHG<i><svg><use href="#chev" /></svg></i></a>
                  </div>
                </div>
              </div>
              <footer class="edit">Bearbeiten</footer>
            </article>

            <article class="activity">
              <div class="act-head">
                <span>Alle Aktivitäten</span><svg width="14" height="22"><use href="#updown" /></svg>
                <label class="act-search"><svg width="37" height="28" viewBox="0 0 37 28" fill="none" stroke="#333" stroke-width="2.400"><circle cx="11" cy="11" r="9" /><path d="M17.500 17.500L24 25M25 10l4.500 5 4.500-5" /></svg>Alle</label>
              </div>
              <div class="feed">
                <div class="timeline">
                  <i class="band"></i>
                  <i class="tick" style="top:6px"></i>
                  <i class="tick" style="top:94px"></i>
                  <i class="tick" style="top:131px"></i>
                  <i class="tick" style="top:134px"></i>
                  <i class="tick now" style="top:138px"></i>
                  <i class="tick" style="top:150px"></i>
                  <i class="tick" style="top:190px"></i>
                  <i class="tick" style="top:196px"></i>
                  <i class="tick" style="top:212px"></i>
                  <i class="tick" style="top:242px"></i>
                  <i class="tick" style="top:248px"></i>
                  <i class="tick" style="top:300px"></i>
                  <i class="tick" style="top:530px"></i>
                  <i class="tick" style="top:586px"></i>
                  <i class="tick" style="top:588px"></i>
                  <i class="tick" style="top:640px"></i>
                  <i class="tick" style="top:646px"></i>
                  <i class="tick" style="top:688px"></i>
                  <i class="tick" style="top:740px"></i>
                  <i class="tick" style="top:744px"></i>
                  <i class="tick" style="top:776px"></i>
                  <i class="tick" style="top:1662px"></i>
                  <i class="pt" style="top:153px"></i>
                  <span style="top:296px">24</span>
                  <i class="pt" style="top:463px"></i>
                  <span style="top:606px">23</span>
                  <i class="pt" style="top:775px"></i>
                  <span style="top:916px">22</span>
                  <i class="pt" style="top:1085px"></i>
                  <span style="top:1225px">21</span>
                  <i class="pt" style="top:1395px"></i>
                  <span style="top:1535px">20</span>
                </div>

                <div class="stub"><i class="bar darkred"></i></div>
                <div class="act">
                  <i class="check"></i>
                  <div class="body"><div class="line"><b>Hier muss noch was gemacht werden</b><time>29. Juli 2025</time></div><p>Paul Präsentator</p><p class="text">Hier könnte Ihre Werbung stehen... :-)</p></div>
                  <i class="bar darkred"></i>
                </div>
                <h2>Die nächsten sieben Tage</h2>
                <div class="act">
                  <i class="check"></i>
                  <div class="body"><div class="line"><b>Messe Kommunizieren 2.0 in Berlin - Protokoll versenden</b><time>28. Juli 2025</time></div><p>Bernd Berater</p><p class="text">Bitte Template "Beratungsprotokoll" verwenden</p></div>
                  <i class="bar darkred"></i>
                </div>
                <div class="act">
                  <i class="check"></i>
                  <div class="body"><div class="line"><b>Messe Kommunizieren 2.0 in Berlin - Beratung durchführen</b><time>26. Juli 2025</time></div><p>Bernd Berater</p><p class="text">Hier bitte die besprochenen Themen protokollieren:</p></div>
                  <i class="bar darkred"></i>
                </div>
                <h2>Heute später</h2>
                <div class="act">
                  <i class="check"></i>
                  <div class="body"><div class="line"><b>Messe Kommunizieren 2.0 in Berlin - Offene Fragen klären</b><time class="today">Heute</time></div><p>Viktor Vertriebler</p></div>
                  <i class="bar green"></i>
                </div>
                <div class="now-line"><i></i><hr><span>Jetzt</span></div>
                <h2>Früher in diesem Jahr</h2>
                <div class="act">
                  <svg class="aico"><use href="#person" /></svg>
                  <div class="body"><div class="line"><b><em>Verknüpft mit</em> Olaf Obermeier <em>als Dienstleister</em></b><time>7. Juli 2025</time></div></div>
                  <i class="bar blue"></i>
                </div>
                <div class="act">
                  <svg class="aico"><use href="#clock" /></svg>
                  <div class="body"><div class="line"><b>Anruf von Theo Thielmann</b><time>7. Juli 2025<small>11:30</small></time></div><p class="text">Schreibe alles auf was wichtig ist</p></div>
                  <i class="bar green"></i>
                </div>
                <div class="act">
                  <svg class="aico"><use href="#person" /></svg>
                  <div class="body"><div class="line"><b><em>Verknüpft mit</em> Konrad Kirsch <em>als Teilnehmer</em></b><time>20. Mai 2025</time></div></div>
                  <i class="bar plum"></i>
                </div>
                <div class="act">
                  <svg class="aico"><use href="#office" /></svg>
                  <div class="body"><div class="line"><b><em>Verknüpft mit</em> Obermeier GmbH</b><time>14. Mai 2025</time></div></div>
                  <i class="bar blue"></i>
                </div>
                <div class="act">
                  <svg class="aico"><use href="#tag" /></svg>
                  <div class="body"><div class="line"><b>Durchführung</b><time>25. Apr. 2025</time></div><p>individuelle Beratung</p></div>
                  <i class="bar none"></i>
                </div>
                <div class="act">
                  <svg class="aico"><use href="#clock" /></svg>
                  <div class="body"><div class="line"><b>[ ]⊙ Messe Kommunizieren 2.0 in Berlin - Agenda mit Kunde<br>absprechen</b><time>19. März 2025<small>16:17</small></time></div></div>
                  <i class="bar darkred"></i>
                </div>
                <div class="act long">
                  <svg class="aico"><use href="#letter" /></svg>
                  <div class="body"><div class="line"><b>Upcoming appointment<em>hallo@iosxpert.net</em></b><time>13. März 2025<small>12:15</small></time></div><p class="text">Hello Paul, I would like to discuss some last details about the upcoming<br>appointment with you. Could you please contact me at short notice? Best</p></div>
                  <i class="bar none"></i>
                </div>
                <div class="act long">
                  <svg class="aico"><use href="#letter" /></svg>
                  <div class="body"><div class="line"><b>Re: Erstanfrage<em>Mondschein Admin</em></b><time>10. Jan. 2025<small>15:14</small></time></div></div>
                  <i class="bar none"></i>
                </div>
              </div>
            </article>
          </div>
        </section>
      </div>
    </div>

    <!-- filter popover -->
    <div class="popover">
      <svg class="arrow" width="22" height="84" viewBox="0 0 22 84"><path d="M22 1L5 34q-5 8 0 16l17 33" fill="#e0e0e0" stroke="#bdbdbd" stroke-width="1.500" /></svg>
      <div class="crit">
        <span>Projekte, die</span>
        <span class="select wide">allen der folgenden Kriterien<svg width="11" height="18"><use href="#updown" /></svg></span>
        <span class="match">entsprechen</span>
        <button class="save">Filterliste sichern</button>
        <button class="sq"><svg width="20" height="20" viewBox="0 0 20 20" stroke="#111" stroke-width="2"><path d="M10 1v18M1 10h18" /></svg></button>
        <button class="sq"><svg width="18" height="6" viewBox="0 0 18 6" fill="#111"><circle cx="3" cy="3" r="2.300" /><circle cx="9" cy="3" r="2.300" /><circle cx="15" cy="3" r="2.300" /></svg></button>
      </div>
      <div class="crit second">
        <span class="select link">iOWeblink<svg width="11" height="18"><use href="#updown" /></svg></span>
        <span class="select yes">Ja<svg width="11" height="18"><use href="#updown" /></svg></span>
        <button class="sq minus"><svg width="20" height="20" viewBox="0 0 20 20" stroke="#111" stroke-width="2"><path d="M1 10h18" /></svg></button>
        <button class="sq"><svg width="20" height="20" viewBox="0 0 20 20" stroke="#111" stroke-width="2"><path d="M10 1v18M1 10h18" /></svg></button>
        <button class="sq"><svg width="18" height="6" viewBox="0 0 18 6" fill="#111"><circle cx="3" cy="3" r="2.300" /><circle cx="9" cy="3" r="2.300" /><circle cx="15" cy="3" r="2.300" /></svg></button>
      </div>
    </div>
  </div>
</body>

</html>
```

FILE: styles.css
```css
* {
  box-sizing: border-box;
}

body {
  margin: 0;
  padding: 76px 112px 0;
  height: 2242px;
  overflow: hidden;
  background: #fff;
  color: #262626;
  font: 25px/32px Inter, "Liberation Sans", "DejaVu Sans", sans-serif;
  letter-spacing: .23px;
  white-space: nowrap;
}

h1, h2, h4, p, ul, dl, dd {
  margin: 0;
  padding: 0;
  font-weight: 400;
}

ul {
  list-style: none;
}

i, em {
  font-style: normal;
}

b {
  font-weight: 400;
}

svg {
  display: block;
  flex: none;
}

button {
  appearance: none;
  padding: 0;
  border: none;
  background: none;
  color: inherit;
  font: inherit;
  letter-spacing: inherit;
  display: flex;
  align-items: center;
  justify-content: center;
}

.sprite {
  position: absolute;
}

.window {
  position: relative;
  display: flex;
  width: 3456px;
  height: 2018px;
  border-radius: 20px;
  background: #fff;
  box-shadow: 0 0 2px 1px rgba(0, 0, 0, .3), 0 36px 100px rgba(0, 0, 0, .44);
}

/* sidebar */
.sidebar {
  width: 601px;
  flex: none;
  display: flex;
  flex-direction: column;
  overflow: hidden;
  border-radius: 20px 0 0 20px;
  border-right: 2px solid #d4d4d4;
  background: #eaeaea;
}

.titlebar {
  display: flex;
  align-items: center;
  height: 104px;
  padding-left: 40px;
  flex: none;
}

.light {
  width: 24px;
  height: 24px;
  margin-right: 16px;
  border-radius: 50%;
  border: 1px solid rgba(0, 0, 0, .15);
}

.light.red { background: #ed6a5e; }
.light.yellow { background: #f5bf4f; }
.light.green { background: #61c554; }

.side-toggle {
  margin-left: 36px;
  margin-bottom: 4px;
}

.side-list {
  flex: 1;
  min-height: 0;
  overflow: hidden;
  padding: 20px 20px 0;
}

.item {
  display: flex;
  align-items: center;
  height: 56px;
  padding-left: 16px;
  border-radius: 10px;
  color: #454545;
}

.item.active {
  background: #d2d2d2;
}

.item.plain {
  color: #222;
}

.ico {
  width: 32px;
  height: 32px;
  margin-right: 12px;
}

.ico.mail {
  width: 38px;
}

.ico.chat {
  width: 38px;
  margin-left: -3px;
  margin-right: 9px;
}

.share {
  margin-left: auto;
  margin-right: 22px;
}

.side-list h4 {
  height: 42px;
  margin: 22px 0 0 13px;
  color: #adadad;
  font-size: 21px;
  font-weight: 600;
  line-height: 42px;
  letter-spacing: .6px;
}

.side-footer {
  display: flex;
  align-items: center;
  gap: 28px;
  height: 44px;
  flex: none;
  padding: 0 0 4px 8px;
  border-top: 2px solid #cfcfcf;
}

/* toolbar */
.main {
  flex: 1;
  min-width: 0;
  display: flex;
  flex-direction: column;
  overflow: hidden;
  border-radius: 0 20px 20px 0;
}

.toolbar {
  display: flex;
  align-items: center;
  height: 106px;
  flex: none;
  border-bottom: 2px solid #d9d9d9;
  background: #fcfcfc;
  color: #6e6e6e;
  padding: 0 0 2px 71px;
}

.new-project {
  gap: 12px;
  width: 210px;
  justify-content: flex-start;
}

.sep {
  width: 2px;
  height: 40px;
  background: #ececec;
}

.new-project + .sep {
  margin-left: 43px;
}

.drop {
  margin: 0 39px 0 23px;
}

.view {
  display: flex;
  align-items: center;
  justify-content: center;
  width: 84px;
  height: 56px;
  border-radius: 12px;
}

.view.active {
  background: #efefef;
  margin-right: 2px;
}

.chart {
  margin-left: 22px;
}

.tools {
  display: flex;
  align-items: center;
  margin-left: auto;
  padding-right: 24px;
}

.tgroup {
  display: flex;
  align-items: center;
  gap: 18px;
}

.phones { margin-left: 103px; }
.times { margin-left: 100px; }
.bell-team { margin-left: 98px; }
.bell { margin-left: 46px; }

.search {
  display: flex;
  align-items: center;
  gap: 11px;
  width: 649px;
  height: 56px;
  margin-left: 30px;
  padding: 2px 0 0 12px;
  border: 2px solid #ededed;
  border-radius: 12px;
  color: #bcbcbc;
}

/* project list */
.columns {
  flex: 1;
  min-height: 0;
  display: flex;
}

.list-pane {
  width: 1002px;
  flex: none;
  display: flex;
  flex-direction: column;
  border-right: 2px solid #d9d9d9;
}

.sort {
  display: flex;
  align-items: center;
  gap: 16px;
  height: 44px;
  padding: 0 12px 0 18px;
  background: #fafafa;
  color: #111;
  font-size: 22px;
  letter-spacing: .3px;
}

.funnel {
  margin-left: auto;
}

.filtered {
  display: flex;
  align-items: center;
  justify-content: space-between;
  height: 38px;
  padding: 0 22px 0 18px;
  background: #3d80e8;
  color: #fff;
  font-size: 22px;
  font-weight: 500;
}

.projects {
  flex: 1;
  padding-top: 20px;
}

.projects li {
  display: flex;
  height: 98px;
  padding-left: 6px;
}

.bar {
  width: 8px;
  border-radius: 4px;
  margin: 6px 0;
  flex: none;
}

.darkred { background: #7f1e12; }
.orange { background: #ea943a; }
.yellow { background: #f8f57c; }
.navy { background: #215291; }
.green { background: #3c8a25; }
.blue { background: #3f8cf0; }
.plum { background: #7c2250; }

.row {
  flex: 1;
  display: flex;
  align-items: center;
  justify-content: space-between;
  margin: 0 32px 0 18px;
  padding: 2px 36px 0 0;
  border-bottom: 2px solid #e4e4e4;
}

.row p {
  padding-top: 3px;
}

.row.single p {
  padding-top: 0;
}

.row b, .row span {
  display: block;
}

.row span {
  color: #828282;
}

.row b svg {
  display: inline-block;
  width: 36px;
  height: 36px;
  margin: -6px 2px -8px 0;
  vertical-align: baseline;
}

.row b .after {
  margin-left: 5px;
}

.row .pl {
  width: 24px;
  height: 24px;
  opacity: .68;
}

.row.last {
  border-color: transparent;
}

.projects li.selected .row {
  margin: 0 20px 0 6px;
  padding: 0 12px;
  border: none;
  border-radius: 10px;
  background: #ca702c;
  color: #fff;
}

.selected b {
  font-weight: 500;
  letter-spacing: 0;
}

.selected .row span {
  color: #efc7a8;
}

.count, .edit {
  height: 44px;
  flex: none;
  border-top: 2px solid #dcdcdc;
  background: #f3f3f3;
  line-height: 42px;
}

.count {
  color: #757575;
  font-size: 23px;
  letter-spacing: .6px;
  text-align: center;
}

/* right side */
.content {
  flex: 1;
  min-width: 0;
  display: flex;
  flex-direction: column;
}

.head {
  height: 158px;
  flex: none;
  padding: 8px 11px 0 14px;
  border-bottom: 2px solid #e0e0e0;
  background: #fafafa;
}

.actions {
  display: flex;
  justify-content: flex-end;
  gap: 10px;
}

.actions button {
  height: 53px;
  border: 2px solid #e2e2e2;
  border-bottom-color: #cdcdcd;
  border-radius: 8px;
  background: #fff;
  padding-top: 5px;
  gap: 9px;
}

.actions .note { width: 230px; justify-content: flex-end; padding-right: 22px; }
.actions .event { width: 250px; }
.actions .task { width: 259px; }
.actions .more { width: 78px; }

.tabs {
  display: flex;
  gap: 16px;
  margin-top: 16px;
}

.tab {
  display: flex;
  align-items: flex-start;
  height: 71px;
  border-radius: 8px;
  background: #f4f4f4;
  color: #8a8a8a;
  padding-top: 6px;
  line-height: 31px;
}

.tab p {
  color: #1f1f1f;
}

.tab b, .tab span {
  display: block;
}

.tab b {
  letter-spacing: .4px;
}

.tab span {
  color: #7d7d7d;
  font-size: 24px;
  letter-spacing: 0;
}

.tab .inf {
  margin: 4px 17px 0 14px;
}

.tab.on {
  padding-top: 4px;
  border: 2px solid #e9bf9e;
  background: #f7e8dd;
  color: #cb6a22;
}

.tab.on .inf {
  margin: 4px 15px 0 13px;
}

.details { width: 512px; }
.tasks { width: 330px; }
.copilot { width: 217px; }
.docs { width: 243px; }
.web { width: 147px; }
.budget { width: 272px; }

.copilot svg { margin: 9px 26px 0 15px; }
.docs svg { margin: 8px 18px 0 10px; }
.web svg { margin: 4px 12px 0 4px; }
.budget svg { margin: 7px 18px 0 18px; }

.panes {
  flex: 1;
  min-height: 0;
  display: flex;
}

/* detail */
.detail {
  width: 744px;
  flex: none;
  display: flex;
  flex-direction: column;
  border-right: 2px solid #dedede;
}

.fields {
  flex: 1;
  min-height: 0;
  overflow: hidden;
  padding-top: 36px;
}

.field {
  display: flex;
  align-items: center;
  min-height: 32px;
}

.field label {
  display: flex;
  justify-content: flex-end;
  width: 214px;
  margin-right: 16px;
  flex: none;
  color: #828282;
}

.field > span {
  padding-left: 3px;
}

.grey {
  color: #828282;
}

.title {
  align-items: flex-start;
}

.title label {
  padding: 6px 16px 0 0;
}

.title h1 {
  padding-left: 3px;
  font-size: 32px;
  line-height: 40px;
  letter-spacing: 0;
}

h1 svg {
  display: inline-block;
  width: 42px;
  height: 43px;
  margin: -12px 2px -8px 0;
}

.weblink {
  margin-top: 33px;
}

.switch {
  width: 52px;
  height: 32px;
  border-radius: 16px;
  background: #f3b14e;
  margin-right: 15px;
  border: 2px solid #e5a23e;
}

.switch::after {
  content: "";
  display: block;
  width: 29px;
  height: 28px;
  margin-left: 19px;
  border-radius: 50%;
  background: #fff;
}

.url {
  display: block;
  margin: 32px 0 0 230px;
  color: #2563d6;
  letter-spacing: -.05px;
}

.mini {
  display: flex;
  gap: 9px;
  height: 26px;
  margin: 4px 0 0 230px;
}

.share-info {
  margin: 4px 0 -4px 232px;
  line-height: 38px;
}

.share-info div {
  display: flex;
}

.share-info dt {
  width: 231px;
  letter-spacing: 0;
}

.share-info .warn {
  color: #f4b04e;
}

.pipeline { margin-top: 32px; }
.stage { margin-top: 5px; }
.category { margin-top: 35px; }
.status { margin-top: 8px; }
.due { margin-top: 34px; }
.begin { margin-top: 13px; }
.integr { margin-top: 40px; gap: 8px; }
.integr label { margin-right: 8px; }
.integr .bub { margin: 0 2px 4px 3px; }
.people { margin-top: 34px; }
.vendor { margin-top: 26px; }
.persons { margin-top: 30px; }

.people, .vendor, .persons {
  align-items: flex-start;
  line-height: 40px;
}

.stage button {
  width: 205px;
  height: 36px;
  margin-left: 20px;
  border: 2px solid #b3b3b3;
  border-radius: 9px;
  font-size: 22px;
}

.dot {
  width: 23px;
  height: 23px;
  margin: 0 6px 0 4px;
  border-radius: 50%;
  border: 2px solid #c07a2c;
  background: #f0983a;
}

.date {
  display: flex;
}

.date i {
  width: 48px;
}

.date i + i {
  width: 29px;
}

.chips {
  display: flex;
  flex-direction: column;
  align-items: flex-start;
  gap: 4px;
}

.chip {
  display: flex;
  align-items: center;
  height: 40px;
  padding-left: 10px;
  border: 2px solid #dadada;
  border-radius: 6px;
  line-height: 36px;
}

.chip svg {
  width: 24px;
  height: 24px;
  margin-right: 7px;
  color: #808080;
}

.chip i {
  display: flex;
  align-items: center;
  justify-content: center;
  width: 29px;
  height: 36px;
  margin-left: 10px;
  border-left: 2px solid #dadada;
}

.chip i svg {
  width: 13px;
  height: 19px;
  margin: 0;
}

.show-more {
  color: #828282;
  font-size: 21px;
  line-height: 32px;
  letter-spacing: .5px;
}

.edit {
  padding-left: 15px;
  color: #757575;
  font-size: 23px;
  font-weight: 600;
  letter-spacing: 1px;
}

/* activity feed */
.activity {
  flex: 1;
  min-width: 0;
  display: flex;
  flex-direction: column;
}

.act-head {
  display: flex;
  align-items: center;
  gap: 16px;
  height: 74px;
  flex: none;
  margin-right: 3px;
  padding: 0 14px 0 21px;
  border-bottom: 2px solid #e2e2e2;
  border-right: 2px solid #e2e2e2;
  color: #828282;
}

.act-search {
  display: flex;
  align-items: center;
  gap: 8px;
  width: 327px;
  height: 43px;
  margin-left: auto;
  padding-left: 7px;
  border: 2px solid #ebebeb;
  border-bottom-color: #c9c9c9;
  border-radius: 10px;
  color: #bcbcbc;
}

.feed {
  position: relative;
  flex: 1;
  min-height: 0;
  overflow: hidden;
}

.timeline {
  position: absolute;
  left: 0;
  top: 0;
}

.timeline i, .timeline span {
  position: absolute;
  left: 0;
}

.timeline .band {
  top: 82px;
  width: 21px;
  height: 300px;
  background: #e6effc;
}

.timeline .tick {
  width: 12px;
  height: 3px;
  background: #6ba0f0;
}

.timeline .tick.now {
  width: 28px;
  height: 2px;
  background: #d8483a;
}

.timeline .pt {
  left: 37px;
  width: 6px;
  height: 6px;
  border-radius: 50%;
  background: #7fabf0;
}

.timeline span {
  left: 33px;
  color: #3b7fe8;
  font-size: 21px;
}

.stub {
  display: flex;
  justify-content: flex-end;
  height: 8px;
  padding-right: 8px;
}

.stub .bar {
  height: 5px;
  margin: 0;
  border-radius: 0 0 4px 4px;
}

.act {
  display: flex;
  align-items: flex-start;
  padding-left: 85px;
}

.check {
  width: 27px;
  height: 27px;
  margin: 21px 32px 0 7px;
  border: 2px solid #7d7d7d;
  border-radius: 4px;
}

.aico {
  width: 32px;
  height: 30px;
  margin: 18px 30px 0 4px;
  color: #505050;
}

.body {
  width: 920px;
  min-height: 66px;
  padding: 16px 0 14px;
  border-top: 2px solid #e4e4e4;
}

.act .bar {
  align-self: stretch;
  margin: 6px 0 4px 22px;
}

.line {
  display: flex;
  justify-content: space-between;
  align-items: flex-start;
}

/* optical alignment of the text with the divider */
.line b, .body p {
  margin-left: -2px;
}

.body p, .body em {
  color: #828282;
}

.body .text {
  margin: 16px 0 -2px -2px;
}

.long em {
  display: block;
}

.long .body {
  padding-bottom: 34px;
}

time {
  color: #3b7fe8;
  text-align: right;
}

time small {
  display: block;
  color: #7fabf0;
  font-size: 25px;
}

.today {
  color: #d8483a;
}

.activity h2 {
  height: 98px;
  padding: 42px 0 0 152px;
  color: #3b7fe8;
  font-size: 32px;
  line-height: 40px;
  letter-spacing: 0;
}

.now-line {
  display: flex;
  align-items: center;
  height: 62px;
  padding: 5px 43px 0 95px;
  color: #d8483a;
}

.now-line i {
  width: 18px;
  height: 18px;
  border-radius: 50%;
  background: #d8483a;
}

.now-line hr {
  flex: 1;
  height: 3px;
  margin: 0 26px 0 0;
  border: none;
  background: #d8483a;
}

/* popover */
.popover {
  position: absolute;
  left: 1622px;
  top: 71px;
  width: 1106px;
  height: 121px;
  border: 12px solid #f09837;
  border-radius: 32px;
  background: #e0e0e0;
  box-shadow: 0 10px 40px rgba(0, 0, 0, .28);
  color: #333;
  font-size: 22px;
  letter-spacing: .1px;
}

.arrow {
  position: absolute;
  left: -33px;
  top: 5px;
}

.crit {
  display: flex;
  align-items: center;
  height: 46px;
  padding: 0 4px 2px 10px;
  border-bottom: 2px solid #c6c6c6;
}

.crit.second {
  border: none;
  height: 51px;
  padding: 0 4px 0 6px;
}

.select {
  display: flex;
  align-items: center;
  justify-content: space-between;
  height: 32px;
  padding: 0 10px 0 8px;
  border: 2px solid #949494;
  border-radius: 8px;
}

.select svg {
  color: #7d7d7d;
}

.select.wide { width: 448px; margin-left: 17px; }
.select.link { width: 200px; }
.select.yes { width: 88px; margin-left: 12px; }
.match { margin-left: 17px; }

.save {
  width: 210px;
  height: 32px;
  margin-left: auto;
  border: 2px solid #949494;
  border-radius: 8px;
  color: #111;
  letter-spacing: .3px;
}

.sq {
  width: 36px;
  height: 32px;
  margin-left: 8px;
  border: 2px solid #949494;
  border-radius: 7px;
}

.sq.minus {
  margin-left: auto;
}
```
